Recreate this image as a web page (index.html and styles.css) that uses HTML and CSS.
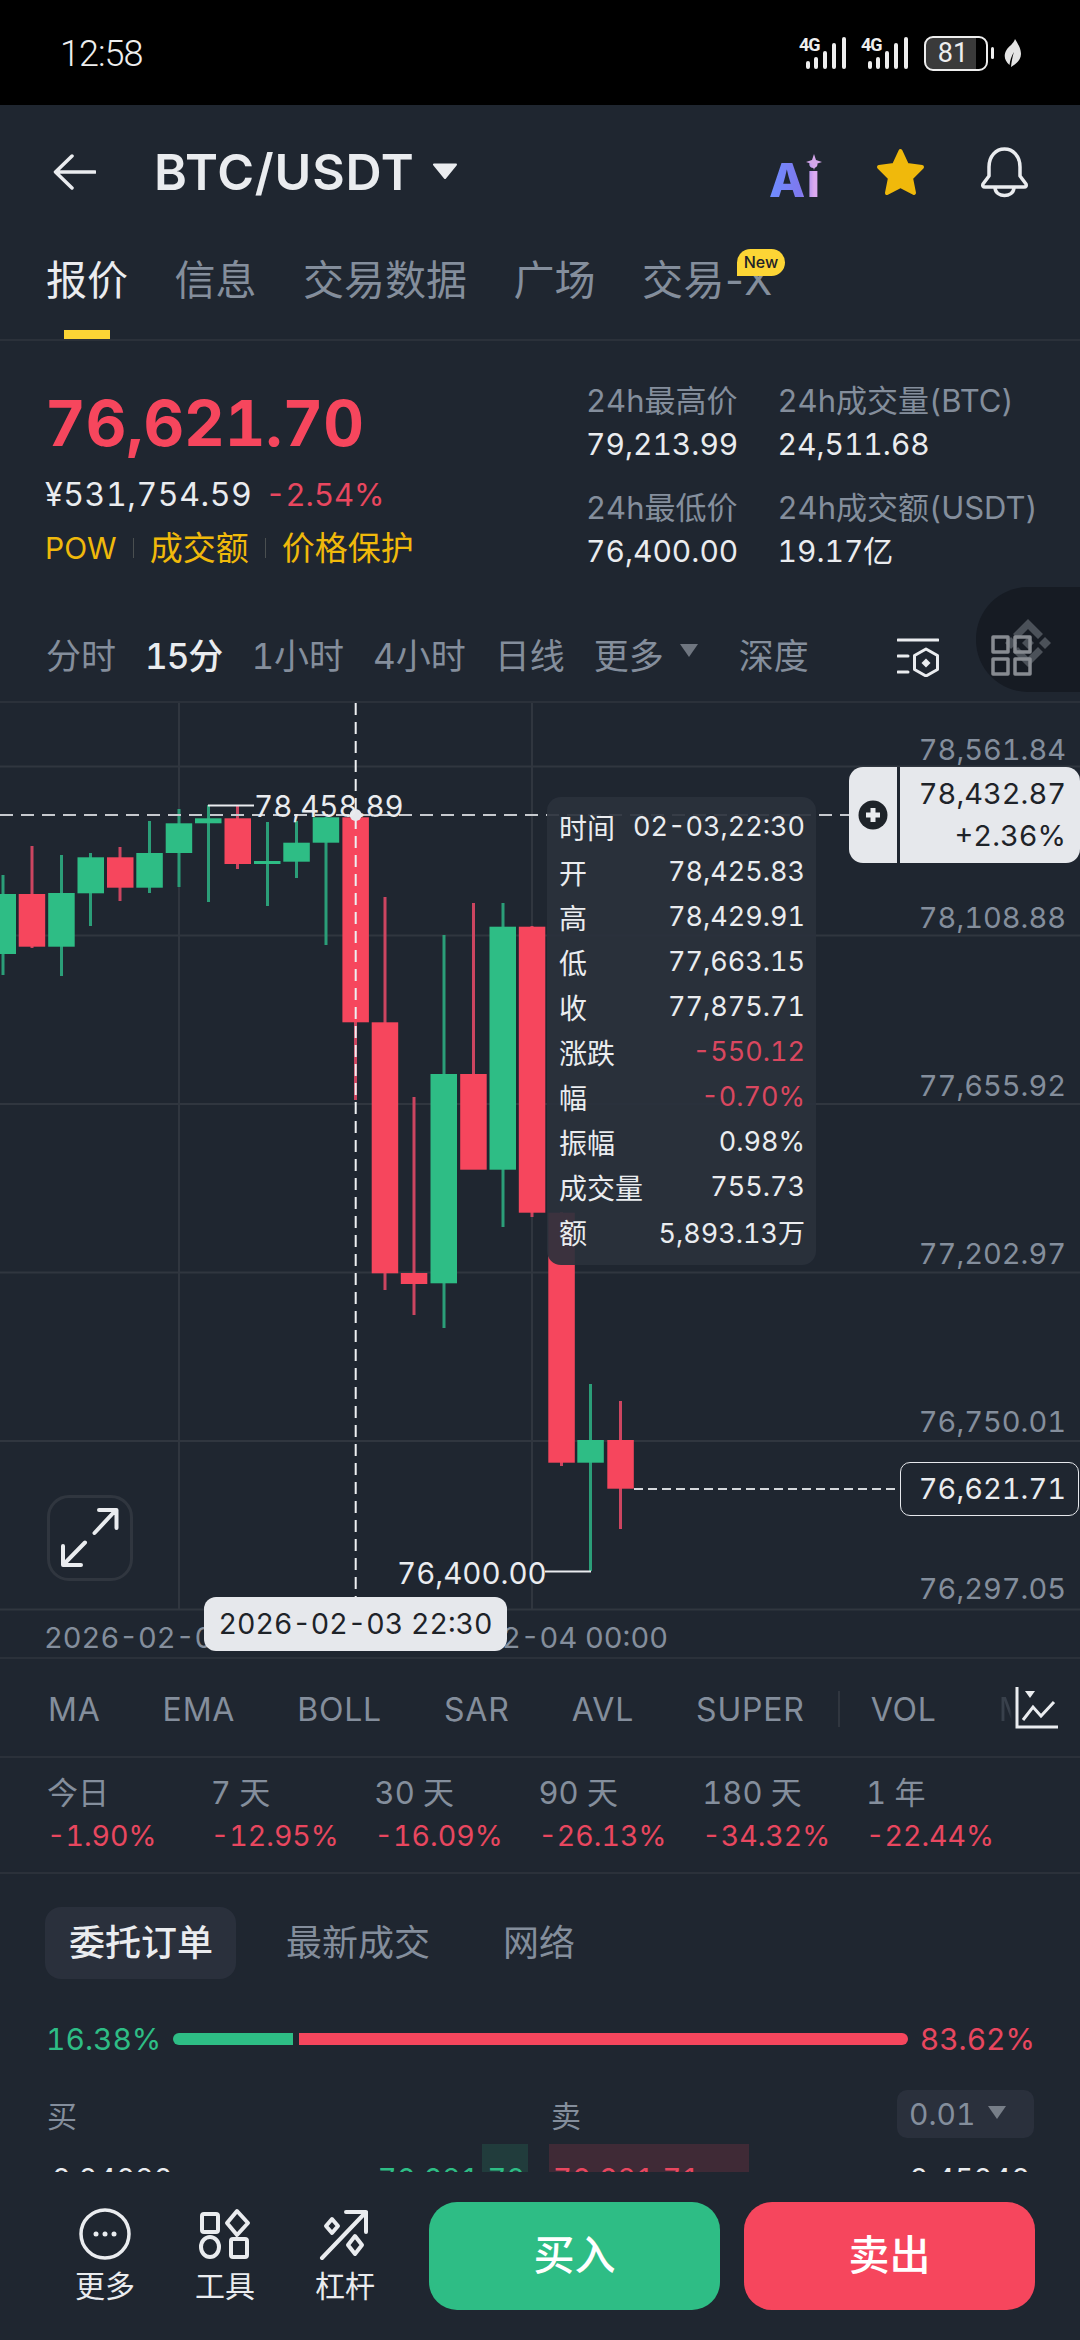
FILE: index.html
```html
<!DOCTYPE html>
<html lang="zh">
<head>
<meta charset="utf-8">
<title>BTC/USDT</title>
<link rel="stylesheet" href="styles.css">
</head>
<body>
<div class="phone">

  <div class="status">
    <span class="clock">12:58</span>
    <div class="status-right">
      <svg class="sig" width="49" height="44" viewBox="0 -10 49 44"><text class="sig-t" x="0" y="15">4G</text><g fill="#eee"><rect x="7" y="25" width="4" height="8" rx="2"/><rect x="15" y="21" width="4" height="12" rx="2"/><rect x="24" y="15" width="4" height="18" rx="2"/><rect x="33" y="7" width="4" height="26" rx="2"/><rect x="43" y="1" width="4" height="32" rx="2"/></g></svg>
      <svg class="sig" width="49" height="44" viewBox="0 -10 49 44"><text class="sig-t" x="0" y="15">4G</text><g fill="#eee"><rect x="7" y="25" width="4" height="8" rx="2"/><rect x="15" y="21" width="4" height="12" rx="2"/><rect x="24" y="15" width="4" height="18" rx="2"/><rect x="33" y="7" width="4" height="26" rx="2"/><rect x="43" y="1" width="4" height="32" rx="2"/></g></svg>
      <div class="battery"><div class="batt-body"><span class="batt-num">81</span></div><i class="batt-tip"></i></div>
      <svg class="leaf" width="17" height="28" viewBox="0 0 17 28"><path d="M11 0C14 5 17 9 17 15C17 21 12 25 7 28C7.500 23 8.500 17 10 13C7.500 17 6 21 5.500 26C1 22 -1 17 2.500 11C5 7 9.500 5 11 0Z" fill="#e4e4e4"/></svg>
    </div>
  </div>

  <header class="topbar">
    <svg class="ic-back" width="43" height="36" viewBox="0 0 43 36"><path d="M42 18H3M19 2L2.500 18L19 34" fill="none" stroke="#eaecef" stroke-width="3.500" stroke-linecap="round" stroke-linejoin="round"/></svg>
    <h1 class="pair">BTC/USDT</h1>
    <svg class="ic-caret" width="26" height="16" viewBox="0 0 26 16"><path d="M2 1.500H24L13 15Z" fill="#eaecef" stroke="#eaecef" stroke-width="2" stroke-linejoin="round"/></svg>
    <div class="top-actions">
      <div class="ai"><span class="ai-txt">Ai</span><svg class="ai-spark" width="16" height="16" viewBox="0 0 16 16"><path d="M8 0L10 6L16 8L10 10L8 16L6 10L0 8L6 6Z" fill="#d4a6ea"/></svg></div>
      <svg width="51" height="49" viewBox="0 0 51 49"><path d="M25.500 3L32 17L47 19L36 30L39 45L25.500 38L12 45L15 30L4 19L19 17Z" fill="#f0b90b" stroke="#f0b90b" stroke-width="4" stroke-linejoin="round"/></svg>
      <svg width="49" height="51" viewBox="0 0 49 51"><path d="M9 20C9 9 16 2 24.500 2C33 2 40 9 40 20V29L46 37Q47 40 44 40H5Q2 40 3 37L9 29ZM15 41C16 51 33 51 34 41" fill="none" stroke="#eaecef" stroke-width="3.500" stroke-linejoin="round" stroke-linecap="round"/></svg>
    </div>
  </header>

  <nav class="tabs">
    <div class="tab tab-on"><span>报价</span><i class="tab-bar"></i></div>
    <div class="tab"><span>信息</span></div>
    <div class="tab"><span>交易数据</span></div>
    <div class="tab"><span>广场</span></div>
    <div class="tab tab-new"><span>交易-X</span><b class="badge">New</b></div>
  </nav>

  <section class="summary">
    <div class="sum-left">
      <div class="last">76,621.70</div>
      <div class="fiat"><span>¥531,754.59</span><span class="red fiat-pct">-2.54%</span></div>
      <div class="tags"><span class="tag-pow">POW</span><i></i><span>成交额</span><i></i><span>价格保护</span></div>
    </div>
    <div class="sum-right">
      <div class="k">24h最高价</div><div class="k">24h成交量(BTC)</div>
      <div class="v">79,213.99</div><div class="v">24,511.68</div>
      <div class="k k2">24h最低价</div><div class="k k2">24h成交额(USDT)</div>
      <div class="v">76,400.00</div><div class="v">19.17亿</div>
    </div>
  </section>

  <section class="intervals">
    <span>分时</span>
    <span class="iv-on">15分</span>
    <span>1小时</span>
    <span>4小时</span>
    <span>日线</span>
    <span class="iv-more">更多<svg width="20" height="15" viewBox="0 0 20 15"><path d="M1 1H19L10 14Z" fill="#6f7680"/></svg></span>
    <span class="iv-depth">深度</span>
    <svg class="iv-set" width="42" height="39" viewBox="0 0 42 39"><g fill="none" stroke="#eaecef" stroke-width="3" stroke-linecap="round"><path d="M1 2H41M1 18H11M1 34H11"/><path d="M29 11L40.500 17.500V31.500L29 38L17.500 31.500V17.500Z" stroke-linejoin="round"/></g><path d="M29 20.500L33.500 25L29 29.500L24.500 25Z" fill="#eaecef"/></svg>
    <div class="float-pill">
      <svg width="104" height="105" viewBox="0 0 104 105"><g fill="#4b5159"><path d="M52 32L67 47L62 52L52 42L42 52L37 47Z"/><path d="M69 50L75 56L69 62L63 56Z"/><path d="M35 50L41 56L35 62L29 56Z"/><path d="M52 50L58 56L52 62L46 56Z"/><path d="M52 80L37 65L42 60L52 70L62 60L67 65Z"/></g><g fill="none" stroke="#878b91" stroke-width="3.500" stroke-linejoin="round"><rect x="17" y="50" width="15" height="15"/><rect x="39" y="50" width="15" height="15"/><rect x="17" y="72" width="15" height="15"/><rect x="39" y="72" width="15" height="15"/></g></svg>
    </div>
  </section>

  <section class="chart">
    <svg class="plot" width="1080" height="954" viewBox="0 703 1080 954">
      <g class="grid">
        <path d="M0 766.500H1080M0 935.500H1080M0 1104H1080M0 1272.500H1080M0 1441H1080M0 1609.500H1080M179 703V1609M532 703V1609"/>
      </g>
      <g class="wick-g">
        <rect x="1.500" y="875" width="3" height="100"/>
        <rect x="60" y="855" width="3" height="121"/>
        <rect x="89" y="853" width="3" height="73"/>
        <rect x="148" y="821" width="3" height="72"/>
        <rect x="177.500" y="809" width="3" height="78"/>
        <rect x="207" y="805" width="3" height="97"/>
        <rect x="266" y="822" width="3" height="84"/>
        <rect x="295" y="821" width="3" height="57"/>
        <rect x="324.500" y="817" width="3" height="128"/>
        <rect x="442.500" y="935" width="3" height="393"/>
        <rect x="501.500" y="903" width="3" height="324"/>
        <rect x="589" y="1384" width="3" height="187"/>
      </g>
      <g class="wick-r">
        <rect x="30.500" y="846" width="3" height="102"/>
        <rect x="118.500" y="847" width="3" height="54"/>
        <rect x="236" y="806" width="3" height="63"/>
        <rect x="354" y="817" width="3" height="283"/>
        <rect x="383.500" y="897" width="3" height="393"/>
        <rect x="412.500" y="1097" width="3" height="218"/>
        <rect x="472" y="903" width="3" height="171"/>
        <rect x="530.500" y="926" width="3" height="291"/>
        <rect x="560" y="1212" width="3" height="254"/>
        <rect x="619" y="1401" width="3" height="128"/>
      </g>
      <g class="body-g">
        <rect x="-10.500" y="894" width="26.500" height="60"/>
        <rect x="48.200" y="893" width="26.500" height="53.700"/>
        <rect x="77.500" y="857.300" width="26.500" height="36"/>
        <rect x="136.300" y="853" width="26.500" height="34.700"/>
        <rect x="165.700" y="823.300" width="26.500" height="29.700"/>
        <rect x="195" y="818.300" width="26.500" height="5"/>
        <rect x="254" y="861" width="26.500" height="3"/>
        <rect x="283.300" y="842.700" width="26.500" height="19"/>
        <rect x="312.700" y="817.300" width="26.500" height="25.400"/>
        <rect x="430.500" y="1074" width="26.500" height="209.300"/>
        <rect x="489.500" y="926.700" width="26.500" height="243"/>
        <rect x="577.300" y="1440" width="26.500" height="22.700"/>
      </g>
      <g class="body-r">
        <rect x="18.700" y="894" width="26.500" height="52.700"/>
        <rect x="107" y="857.300" width="26.500" height="30.400"/>
        <rect x="224.500" y="818.300" width="26.500" height="45.700"/>
        <rect x="342.400" y="817.300" width="26.500" height="205"/>
        <rect x="371.700" y="1022.300" width="26.500" height="251"/>
        <rect x="400.800" y="1273" width="26.500" height="11"/>
        <rect x="460.200" y="1074" width="26.500" height="95.700"/>
        <rect x="518.800" y="926.700" width="26.500" height="286"/>
        <rect x="548.300" y="1212.700" width="26.500" height="250"/>
        <rect x="607.300" y="1440" width="26.500" height="48.700"/>
      </g>
      <path class="dash-h" d="M0 815H850"/>
      <path class="dash-v" d="M355.700 703V1597"/>
      <circle cx="355.700" cy="815" r="6" fill="#e6e8ec"/>
      <path class="marker" d="M208 805.500H254M545 1571.500H591"/>
      <path class="dash-last" d="M634 1489H900"/>
    </svg>

    <div class="axis">
      <span>78,561.84</span><span>78,108.88</span><span>77,655.92</span><span>77,202.97</span><span>76,750.01</span><span>76,297.05</span>
    </div>

    <div class="lbl-high">78,458.89</div>
    <div class="lbl-low">76,400.00</div>

    <div class="cross-pill">
      <div class="cross-add"><svg width="30" height="30" viewBox="0 0 30 30"><circle cx="15" cy="15" r="14.500" fill="#1e2329"/><path d="M15 8V22M8 15H22" stroke="#eaecef" stroke-width="5"/></svg></div>
      <div class="cross-val"><span>78,432.87</span><span>+2.36%</span></div>
    </div>

    <div class="tip">
      <div class="tip-r"><span>时间</span><span>02-03,22:30</span></div>
      <div class="tip-r"><span>开</span><span>78,425.83</span></div>
      <div class="tip-r"><span>高</span><span>78,429.91</span></div>
      <div class="tip-r"><span>低</span><span>77,663.15</span></div>
      <div class="tip-r"><span>收</span><span>77,875.71</span></div>
      <div class="tip-r"><span>涨跌</span><span class="tip-red">-550.12</span></div>
      <div class="tip-r"><span>幅</span><span class="tip-red">-0.70%</span></div>
      <div class="tip-r"><span>振幅</span><span>0.98%</span></div>
      <div class="tip-r"><span>成交量</span><span>755.73</span></div>
      <div class="tip-r"><span>额</span><span>5,893.13万</span></div>
    </div>

    <div class="last-tag">76,621.71</div>

    <div class="expand"><svg width="86" height="86" viewBox="0 0 86 86"><path d="M47.500 38L68 16M38 47.500L17 69M52 15H69.500V33M16 51V70H34" fill="none" stroke="#eaecef" stroke-width="4" stroke-linecap="round" stroke-linejoin="round"/></svg></div>

    <div class="dates"><span>2026-02-03 18:00</span><span>2026-02-04 00:00</span></div>
    <div class="date-pill">2026-02-03 22:30</div>
  </section>

  <section class="indicators">
    <span>MA</span><span>EMA</span><span>BOLL</span><span>SAR</span><span>AVL</span><span>SUPER</span>
    <i class="ind-sep"></i>
    <span class="ind-vol">VOL</span>
    <span class="ind-cut">M</span>
    <svg class="ind-ic" width="44" height="42" viewBox="0 0 44 42"><path d="M2 0V40H43" fill="none" stroke="#eaecef" stroke-width="3"/><path d="M10 4H20L15 11Z" fill="#eaecef"/><path d="M8 33L18 20L26 29L39 15" fill="none" stroke="#eaecef" stroke-width="3"/></svg>
  </section>

  <section class="periods">
    <div class="per"><span>今日</span><b>-1.90%</b></div>
    <div class="per"><span>7 天</span><b>-12.95%</b></div>
    <div class="per"><span>30 天</span><b>-16.09%</b></div>
    <div class="per"><span>90 天</span><b>-26.13%</b></div>
    <div class="per"><span>180 天</span><b>-34.32%</b></div>
    <div class="per"><span>1 年</span><b>-22.44%</b></div>
  </section>

  <section class="book">
    <div class="book-tabs">
      <span class="bt-on">委托订单</span><span>最新成交</span><span class="bt-net">网络</span>
    </div>
    <div class="ratio">
      <span class="green">16.38%</span>
      <div class="ratio-bar"><i class="rb-g" style="flex:16.38"></i><i class="rb-r" style="flex:83.62"></i></div>
      <span class="red">83.62%</span>
    </div>
    <div class="book-head">
      <span class="bh-buy">买</span>
      <span class="bh-sell">卖</span>
      <div class="step">0.01<svg width="20" height="15" viewBox="0 0 20 15"><path d="M1 1H19L10 14Z" fill="#777e88"/></svg></div>
    </div>
    <div class="book-row">
      <div class="side side-b"><i class="depth-g"></i><span>0.04020</span><span class="green">76,621.70</span></div>
      <div class="side side-s"><i class="depth-r"></i><span class="red">76,621.71</span><span>0.45040</span></div>
    </div>
  </section>

  <footer class="bottom">
    <div class="tool">
      <svg width="52" height="52" viewBox="0 0 52 52"><circle cx="26" cy="26" r="24" fill="none" stroke="#eaecef" stroke-width="3.500"/><g fill="#eaecef"><circle cx="17" cy="26" r="2.500"/><circle cx="26" cy="26" r="2.500"/><circle cx="35" cy="26" r="2.500"/></g></svg>
      <span>更多</span>
    </div>
    <div class="tool">
      <svg width="52" height="52" viewBox="0 0 52 52"><g fill="none" stroke="#eaecef" stroke-width="4" stroke-linejoin="round"><rect x="3" y="6" width="16" height="18" rx="2"/><path d="M38 3L49 15L38 27L28 15Z"/><ellipse cx="11" cy="39" rx="9" ry="10"/><rect x="32" y="31" width="16" height="18" rx="2"/></g></svg>
      <span>工具</span>
    </div>
    <div class="tool">
      <svg width="52" height="52" viewBox="0 0 52 52"><g fill="none" stroke="#eaecef" stroke-width="4" stroke-linejoin="round" stroke-linecap="round"><path d="M3 50L47 4M27 4H47V24"/><path d="M13 11L19 18L13 25L7 18Z"/><path d="M36 28L43 37L36 46L29 37Z"/></g></svg>
      <span>杠杆</span>
    </div>
    <div class="trade">
      <div class="btn btn-buy">买入</div>
      <div class="btn btn-sell">卖出</div>
    </div>
  </footer>
</div>
</body>
</html>
```

FILE: styles.css
```css
* { box-sizing: border-box; }
html, body { margin: 0; padding: 0; background: #1f2630; }
body { font-family: Inter, "Noto Sans CJK SC", sans-serif; color: #eaecef; font-variant-numeric: tabular-nums; }
i { display: block; font-style: normal; }
.phone { width: 1080px; height: 2340px; overflow: hidden; position: relative; background: #1f2630; }
.red { color: #e8475f; }
.green { color: #2ebd85; }

/* status bar */
.status { height: 105px; background: #000; display: flex; align-items: center; justify-content: space-between; padding: 2px 59px 0 60px; }
.clock { font-family: Roboto, sans-serif; font-weight: 300; font-size: 36px; color: #eee; letter-spacing: -1px; }
.status-right { display: flex; align-items: center; gap: 13px; margin-top: -12px; }
.sig-t { font-family: Roboto, sans-serif; font-size: 18px; font-weight: 700; fill: #eee; letter-spacing: -1px; }
.sig { overflow: visible; }
.battery { display: flex; align-items: center; gap: 3px; margin: 11px 0 0 1px; }
.batt-body { width: 64px; height: 35px; border: 2.5px solid #eee; border-radius: 9px; background: linear-gradient(90deg, #3a3a3a 0 84%, #000 84%); display: flex; align-items: center; justify-content: center; }
.batt-num { font-family: Roboto, sans-serif; font-size: 27px; color: #eee; font-weight: 400; padding-right: 6px; }
.batt-tip { width: 3px; height: 12px; background: #eee; border-radius: 2px; }
.leaf { margin: 11px 0 0 -3px; }

/* header */
.topbar { height: 123px; display: flex; align-items: center; padding: 11px 51px 0 53px; }
.pair { margin: 0 0 0 58px; font-size: 50px; font-weight: 600; color: #eaecef; line-height: 56px; letter-spacing: .8px; }
.ic-caret { margin-left: 17px; margin-top: -2px; }
.top-actions { margin-left: auto; display: flex; align-items: center; gap: 54px; }
.ai { position: relative; width: 53px; height: 50px; }
.ai-txt { position: absolute; left: 1px; bottom: -11px; font-size: 47px; line-height: 56px; font-weight: 800; letter-spacing: 1.500px; background: linear-gradient(90deg, #6d8dff, #7f78ee 60%, #dcaaf0 85%); -webkit-background-clip: text; background-clip: text; color: transparent; }
.ai-spark { position: absolute; right: -1px; top: 7px; }

/* tabs */
.tabs { height: 113px; display: flex; gap: 46.500px; padding: 26px 0 0 46px; border-bottom: 2px solid #2b313a; }
.tab { position: relative; display: flex; flex-direction: column; align-items: center; font-size: 41px; line-height: 52px; color: #848e9c; }
.tab-on { color: #eaecef; }
.tab-new { letter-spacing: .5px; font-variant-numeric: normal; font-feature-settings: "tnum" 0; }
.tab-bar { width: 46px; height: 9px; background: #fcd535; margin-top: 24px; }
.badge { position: absolute; left: 95px; top: -5px; width: 48px; height: 27px; border-radius: 14px 14px 14px 0; background: #fcd535; color: #1e2329; font-size: 16px; font-weight: 500; line-height: 27px; text-align: center; letter-spacing: 0; }

/* summary */
.summary { height: 254px; display: flex; }
.sum-left { width: 586px; padding: 44px 0 0 45px; }
.last { font-size: 63px; font-weight: 700; line-height: 76px; color: #f6465d; }
.fiat { margin-top: 14px; display: flex; gap: 13px; font-size: 32px; letter-spacing: .6px; line-height: 40px; color: #eaecef; }
.fiat-pct { font-size: 31px; letter-spacing: 0; }
.tags { margin-top: 13px; display: flex; align-items: center; font-size: 33px; line-height: 40px; color: #f0b90b; }
.tag-pow { font-size: 30px; }
.tags i { width: 1px; height: 20px; background: #4a4f50; margin: 0 16px; }
.sum-right { display: grid; grid-template-columns: 191.5px auto; grid-auto-rows: min-content; padding-top: 40px; font-size: 31px; line-height: 40px; }
.k { color: #848e9c; }
.k2 { margin-top: 24px; }
.v { color: #eaecef; margin-top: 3px; font-size: 30px; }

/* intervals */
.intervals { position: relative; height: 108px; display: flex; align-items: center; gap: 29px; padding: 10px 0 0 46px; font-size: 35px; color: #848e9c; border-bottom: 2px solid #2b313a; }
.iv-on { color: #eaecef; font-weight: 500; letter-spacing: -1px; }
.iv-more { display: flex; align-items: center; gap: 15px; }
.iv-more svg { margin-top: -6px; }
.iv-depth { margin-left: 11px; }
.iv-set { position: absolute; left: 897px; top: 43px; }
.float-pill { position: absolute; left: 976px; top: -8px; width: 104px; height: 105px; border-radius: 52px 0 0 52px; background: #161b23; }
.float-pill svg { display: block; }

/* chart */
.chart { position: relative; height: 956px; border-bottom: 2px solid #2b313a; overflow: hidden; }
.plot { position: absolute; left: 0; top: 0; display: block; }
.grid path { fill: none; stroke: #30363f; stroke-width: 2; }
.wick-g rect { fill: #2b9e78; }
.wick-r rect { fill: #cc4560; }
.body-g rect { fill: #2ebd85; }
.body-r rect { fill: #f6465d; }
.dash-h { fill: none; stroke: #c6c9ce; stroke-width: 2; stroke-dasharray: 13 8; }
.dash-v { fill: none; stroke: #eef0f2; stroke-width: 2; stroke-dasharray: 12 7; }
.dash-last { fill: none; stroke: #d5d8dc; stroke-width: 2; stroke-dasharray: 9 5; }
.marker { fill: none; stroke: #eaecef; stroke-width: 2; }
.axis { position: absolute; right: 14px; top: 0; display: flex; flex-direction: column; align-items: flex-end; padding-top: 18px; font-size: 29px; color: #848e9c; }
.axis span { height: 167.900px; line-height: 58px; }
.lbl-high, .lbl-low { position: absolute; font-size: 29.500px; line-height: 40px; color: #eaecef; }
.lbl-high { left: 254px; top: 83px; }
.lbl-low { left: 397px; top: 850px; }
.cross-pill { position: absolute; left: 849px; top: 64px; width: 231px; height: 96px; display: flex; border-radius: 14px; background: #e6e8ec; color: #1e2329; font-size: 29px; }
.cross-add { width: 51px; display: flex; align-items: center; justify-content: center; border-right: 3px solid #1f2630; }
.cross-val { flex: 1; display: flex; flex-direction: column; align-items: flex-end; justify-content: center; padding-right: 14px; line-height: 42px; }
.tip { position: absolute; left: 547px; top: 94px; width: 269px; height: 468px; padding: 7px 11px 11px 12px; border-radius: 14px; background: rgba(42, 49, 60, .92); }
.tip-r { height: 45px; display: flex; justify-content: space-between; align-items: center; font-size: 27px; color: #eaecef; }
.tip-r span:first-child { font-size: 28px; }
.tip-red { color: #d9475f; }
.last-tag { position: absolute; left: 900px; top: 759px; width: 179px; height: 54px; border: 1.5px solid #e6e8ec; border-radius: 10px; background: #1f2630; font-size: 29px; line-height: 51px; text-align: right; padding-right: 12px; color: #eaecef; }
.expand { position: absolute; left: 47px; top: 792px; width: 86px; height: 86px; border: 3px solid #30363f; border-radius: 22px; }
.expand svg { display: block; margin: -3px; }
.dates { position: absolute; left: 44px; right: 412px; top: 915px; display: flex; justify-content: space-between; font-size: 29px; line-height: 40px; color: #848e9c; }
.date-pill { position: absolute; left: 204px; top: 894px; width: 303px; height: 54px; border-radius: 12px; background: #e6e8ec; color: #1e2329; font-size: 28.500px; line-height: 54px; text-align: center; }

/* indicators */
.indicators { position: relative; height: 99px; display: flex; align-items: center; gap: 62px; padding: 3px 0 0 48px; font-size: 32px; letter-spacing: .8px; color: #848e9c; border-bottom: 2px solid #2b313a; }
.ind-sep { width: 2px; height: 36px; background: #30363f; margin: 0 -31px 0 -29px; }
.ind-cut { opacity: .25; -webkit-mask-image: linear-gradient(90deg, #000 0 35%, transparent 45%); mask-image: linear-gradient(90deg, #000 0 35%, transparent 45%); }
.ind-ic { position: absolute; left: 1015px; top: 28px; }

/* periods */
.periods { height: 116px; display: grid; grid-template-columns: repeat(6, 163.8px); padding: 15px 0 0 47px; border-bottom: 2px solid #2b313a; }
.per { display: flex; flex-direction: column; gap: 3px; font-size: 31px; line-height: 40px; color: #848e9c; }
.per b { font-weight: 400; font-size: 28.500px; color: #e8475f; }

/* order book */
.book { height: 298px; overflow: hidden; }
.book-tabs { margin-top: 33px; padding-left: 45px; display: flex; align-items: center; gap: 50px; font-size: 36px; color: #848e9c; }
.book-tabs span { line-height: 72px; }
.book-tabs .bt-on { padding: 0 23px 0 24px; border-radius: 16px; background: #2a303c; color: #eaecef; font-weight: 500; }
.book-tabs .bt-net { margin-left: 23px; }
.ratio { margin-top: 40px; padding: 0 45px 0 46px; display: flex; align-items: center; gap: 12px; font-size: 30px; line-height: 40px; }
.ratio-bar { flex: 1; display: flex; gap: 6px; height: 12px; }
.rb-g { background: #2ebd85; border-radius: 6px 0 0 6px; }
.rb-r { background: #f6465d; border-radius: 0 6px 6px 0; }
.book-head { margin-top: 31px; padding: 0 46px 0 47px; display: flex; align-items: center; font-size: 30px; color: #848e9c; }
.bh-sell { margin-left: 474px; }
.step { margin-left: auto; width: 137px; height: 48px; padding-left: 12px; display: flex; align-items: center; gap: 12px; border-radius: 10px; background: #2a303c; }
.step svg { margin-top: -4px; }
.book-row { margin-top: 6px; display: grid; grid-template-columns: 473px 477px; column-gap: 28px; padding-left: 52px; height: 70px; font-size: 29px; line-height: 70px; }
.side { position: relative; display: flex; justify-content: space-between; }
.side span { position: relative; }
.depth-g { position: absolute; right: -3px; top: 0; width: 46px; height: 100%; background: rgba(46, 189, 133, .15); }
.depth-r { position: absolute; left: -4px; top: 0; width: 200px; height: 100%; background: rgba(246, 70, 93, .15); }

/* bottom */
.bottom { height: 168px; display: flex; align-items: flex-start; padding: 30px 0 0 45px; background: #1f2630; position: relative; }
.tool { width: 120px; padding-top: 6px; display: flex; flex-direction: column; align-items: center; gap: 6px; font-size: 30px; line-height: 40px; color: #eaecef; }
.tool svg { display: block; }
.trade { margin-left: 24px; display: flex; gap: 24px; }
.btn { width: 291px; height: 108px; border-radius: 28px; font-size: 41px; font-weight: 500; line-height: 106px; text-align: center; color: #fff; }
.btn-buy { background: #2ebd85; }
.btn-sell { background: #f6465d; }
```
